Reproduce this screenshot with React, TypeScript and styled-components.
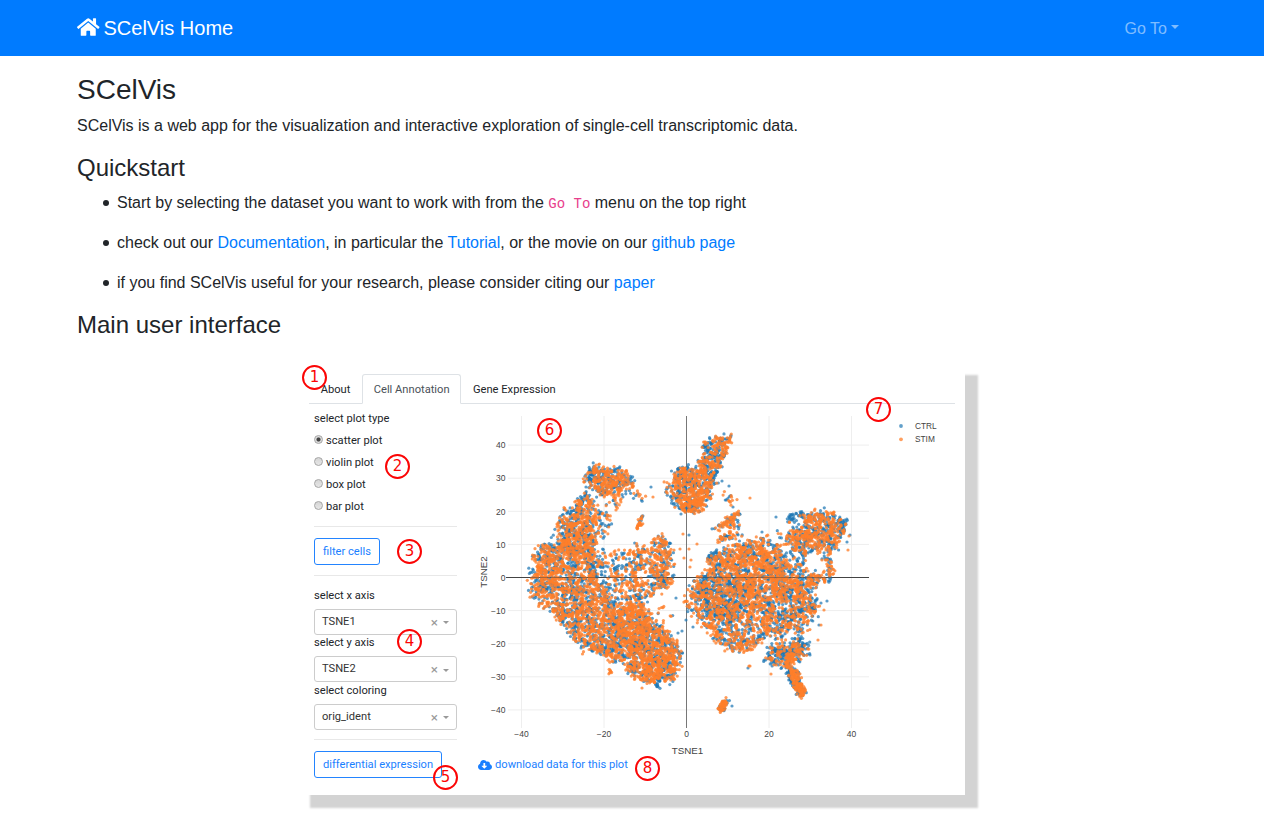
import React from "react";
import styled, { createGlobalStyle } from "styled-components";
import { FaHome, FaCloudDownloadAlt } from "react-icons/fa";

const Global = createGlobalStyle`
  *, *::before, *::after { box-sizing: border-box; }
  body {
    margin: 0;
    min-height: 831px;
    background: #fff;
    color: #212529;
    font: 400 16px/1.5 "Liberation Sans", Arial, sans-serif;
  }
`;

const Navbar = styled.nav`
  height: 56px;
  background: #007bff;
`;
const Container = styled.div`
  width: 1140px;
  margin: 0 auto;
  padding: 0 15px;
`;
const NavRow = styled(Container)`
  height: 100%;
  display: flex;
  align-items: center;
  justify-content: space-between;
`;
const Brand = styled.a`
  display: flex;
  align-items: center;
  gap: 4px;
  color: #fff;
  font-size: 20px;
  line-height: 30px;
`;
const HomeIcon = styled(FaHome)`
  width: 22.5px;
  height: 20px;
  margin-top: -2px;
`;
const NavMenu = styled.a`
  display: flex;
  align-items: center;
  gap: 4px;
  padding: 1px 8px 0;
  color: rgba(255, 255, 255, 0.5);
`;
const Caret = styled.span<{ $size: number }>`
  border: ${(p) => p.$size}px solid transparent;
  border-top-color: currentColor;
  border-bottom: 0;
`;
const MenuCaret = styled(Caret)`
  margin-top: -3px;
`;
const Page = styled(Container)`
  display: flow-root;
  padding-top: 16.5px;
`;
const Title = styled.h3`
  margin: 0 0 8px;
  font-size: 28px;
  font-weight: 500;
  line-height: 1.2;
`;
const Subtitle = styled.h4`
  margin: 0 0 8px;
  font-size: 24px;
  font-weight: 500;
  line-height: 1.2;
`;
const Text = styled.p`
  margin: 0 0 16px;
`;
const List = styled.ul`
  margin: 0;
  padding-left: 40px;
  list-style: none;
`;
const ItemText = styled(Text)`
  &::before {
    content: "";
    display: inline-block;
    width: 6px;
    height: 6px;
    margin: 0 8px 2px -14px;
    border-radius: 50%;
    background: #212529;
  }
`;
const Link = styled.a`
  color: #007bff;
`;
const Code = styled.code`
  color: #e83e8c;
  font-family: "Liberation Mono", monospace;
  font-size: 14px;
`;

const Figure = styled.section`
  position: relative;
  width: 668px;
  height: 433px;
  margin: 22.3px 0 0 220px;
  padding: 12px 10px 0 12px;
  background: #fff;
  box-shadow: 13px 13px 2px #d3d3d3;
  font-family: Roboto, sans-serif;
  font-size: 11.15px;
  line-height: 16px;
`;
const Tabs = styled.div`
  display: flex;
  height: 30px;
  border-bottom: 1px solid #dee2e6;
`;
const Tab = styled.div<{ $active?: boolean }>`
  height: 30px;
  padding: 7px 10.7px;
  border: 1px solid ${(p) => (p.$active ? "#dee2e6" : "transparent")};
  border-bottom-color: ${(p) => (p.$active ? "#fff" : "transparent")};
  border-radius: 3px 3px 0 0;
  color: ${(p) => (p.$active ? "#495057" : "#212529")};
  white-space: nowrap;
`;
const Columns = styled.div`
  display: grid;
  grid-template-columns: 143px 1fr;
  column-gap: 13px;
  padding-left: 5px;
`;
const Controls = styled.div`
  padding-top: 7px;
`;
const Label = styled.div`
  height: 16px;
`;
const Radios = styled.div`
  display: grid;
  grid-auto-rows: 22px;
  padding-top: 3px;
`;
const Radio = styled.label`
  display: flex;
  align-items: center;
  gap: 3px;
`;
const Dot = styled.span<{ $on?: boolean }>`
  width: 9px;
  height: 9px;
  margin-top: -3px;
  border: 1px solid #a5a5a5;
  border-radius: 50%;
  background: ${(p) =>
    p.$on ? "radial-gradient(circle, #444 0 1.6px, #dedede 2.5px)" : "linear-gradient(#d6d6d6, #e6e6e6)"};
`;
const Rule = styled.hr<{ $top: number; $bottom: number }>`
  margin: ${(p) => p.$top}px 0 ${(p) => p.$bottom}px;
  border: 0;
  border-top: 1px solid #e8e8e8;
`;
const Button = styled.button`
  display: block;
  height: 27px;
  padding: 1px 8px 0;
  border: 1px solid #2384ff;
  border-radius: 3px;
  background: #fff;
  color: #1a7fff;
  font: inherit;
  white-space: nowrap;
`;
const Select = styled.div`
  display: flex;
  align-items: center;
  height: 26px;
  margin: 5px 0 0;
  padding: 0 7px;
  border: 1px solid #ccc;
  border-radius: 3px;
  color: #333;
`;
const Value = styled.span`
  flex: 1;
`;
const Clear = styled.span`
  margin-right: 5px;
  color: #999;
  font-size: 13.5px;
`;
const SelectCaret = styled(Caret)`
  margin-top: 2px;
  color: #999;
`;
const Field = styled.div`
  height: 47.3px;
`;
const PlotArea = styled.div``;
const Chart = styled.svg`
  display: block;
  width: 485px;
  height: 352px;
  font-family: "Liberation Sans", Arial, sans-serif;
`;
const Download = styled.a`
  display: flex;
  align-items: center;
  gap: 3px;
  padding: 1px 0 0 8px;
  color: #1a7fff;
`;
const CloudIcon = styled(FaCloudDownloadAlt)`
  width: 14px;
  height: 12px;
`;
const Badge = styled.span<{ $x: number; $y: number }>`
  position: absolute;
  left: ${(p) => p.$x}px;
  top: ${(p) => p.$y}px;
  width: 25px;
  height: 25px;
  border: 2px solid #fb0505;
  border-radius: 50%;
  color: #fb0505;
  font: 15px/21px "DejaVu Sans", sans-serif;
  text-align: center;
`;

type Pt = [number, number];
interface Cluster {
  outline: Pt[];
  ctrl: number;
  stim: number;
  spread?: number;
}

// Cluster outlines in chart units, densities in cells per square unit.
const clusters: Cluster[] = [
  { outline: [[588,469],[600,468],[608,470],[617,468],[627,473],[632,478],[631,487],[619,494],[604,495],[592,490],[586,482]], ctrl: 0.16, stim: 0.17 },
  { outline: [[587,494],[593,503],[590,517],[594,532],[596,550],[575,556],[560,548],[554,535],[562,519],[572,507],[580,499]], ctrl: 0.13, stim: 0.15 },
  { outline: [[592,496],[600,500],[608,512],[609,528],[600,540],[594,530]], ctrl: 0.04, stim: 0.045 },
  { outline: [[600,496],[617,492],[620,500],[616,508],[606,502]], ctrl: 0.04, stim: 0.05 },
  { outline: [[528,576],[535,560],[537,545],[552,546],[562,540],[592,548],[600,564],[598,580],[606,592],[612,602],[630,604],[646,606],[656,622],[668,636],[678,645],[681,658],[675,676],[660,684],[640,680],[628,670],[612,658],[594,650],[582,648],[572,636],[560,622],[548,610],[536,598],[531,588]], ctrl: 0.105, stim: 0.125 },
  { outline: [[615,600],[640,606],[655,622],[679,646],[680,662],[672,678],[655,684],[640,678],[626,650]], ctrl: 0.05, stim: 0.09 },
  { outline: [[598,553],[618,548],[640,552],[660,556],[660,580],[645,600],[612,600],[602,585],[598,572]], ctrl: 0.035, stim: 0.04 },
  { outline: [[636,548],[648,546],[655,560],[650,572],[638,570],[630,562]], ctrl: 0.05, stim: 0.07 },
  { outline: [[656,536],[664,535],[669,548],[670,562],[672,580],[660,590],[655,580],[660,560],[653,550]], ctrl: 0.12, stim: 0.16 },
  { outline: [[624,578],[645,580],[654,594],[640,606],[626,604]], ctrl: 0.05, stim: 0.06 },
  { outline: [[657,607],[664,607],[658,614]], ctrl: 0.05, stim: 0.15, spread: 1 },
  { outline: [[670,614],[675,615],[671,618]], ctrl: 0.05, stim: 0.25, spread: 1 },
  { outline: [[641,515],[643,516],[638,529],[636,528]], ctrl: 0.3, stim: 0.45, spread: 0.4 },
  { outline: [[635,491],[643,497],[642,500],[636,496]], ctrl: 0.12, stim: 0.25, spread: 1 },
  { outline: [[610,670],[612,670],[610,676]], ctrl: 0.1, stim: 0.6, spread: 0.8 },
  { outline: [[676,468],[690,466],[698,470],[708,470],[714,480],[712,495],[706,505],[694,512],[684,511],[674,504],[671,490]], ctrl: 0.14, stim: 0.18 },
  { outline: [[664,480],[672,484],[670,498],[663,496]], ctrl: 0.03, stim: 0.08 },
  { outline: [[684,498],[700,500],[694,513],[682,510]], ctrl: 0.08, stim: 0.2, spread: 1 },
  { outline: [[702,446],[712,437],[722,434],[731,435],[730,448],[723,458],[718,472],[712,480],[702,474],[698,464],[704,456]], ctrl: 0.16, stim: 0.16, spread: 1.3 },
  { outline: [[720,493],[728,495],[735,501],[731,505],[726,499]], ctrl: 0.08, stim: 0.22, spread: 1.2 },
  { outline: [[739,512],[740,516],[733,522],[721,524],[727,517]], ctrl: 0.1, stim: 0.2, spread: 1 },
  { outline: [[713,527],[730,520],[735,523],[717,530]], ctrl: 0.08, stim: 0.14, spread: 1.2 },
  { outline: [[711,543],[718,536],[735,533],[737,538],[722,542]], ctrl: 0.08, stim: 0.14, spread: 1.2 },
  { outline: [[732,518],[738,528],[739,545],[733,550],[731,530]], ctrl: 0.05, stim: 0.07 },
  { outline: [[788,513],[802,513],[806,518],[796,522],[788,520]], ctrl: 0.18, stim: 0.02, spread: 1.3 },
  { outline: [[804,515],[815,512],[832,515],[842,522],[844,530],[838,540],[832,548],[818,546],[808,545],[798,550],[787,545],[790,534],[800,526]], ctrl: 0.14, stim: 0.17 },
  { outline: [[840,522],[846,520],[845,530],[839,536]], ctrl: 0.22, stim: 0.02, spread: 1 },
  { outline: [[792,553],[800,553],[803,546],[818,548],[810,555],[800,565],[792,562]], ctrl: 0.1, stim: 0.04 },
  { outline: [[820,545],[838,545],[836,552],[820,562]], ctrl: 0.06, stim: 0.07 },
  { outline: [[708,553],[717,551],[718,559],[709,562]], ctrl: 0.26, stim: 0.01, spread: 1.2 },
  { outline: [[708,560],[726,549],[748,540],[763,538],[775,545],[786,556],[790,570],[800,578],[806,595],[802,612],[796,628],[780,637],[764,638],[754,646],[740,652],[726,648],[716,640],[708,630],[698,622],[690,612],[687,598],[694,583],[704,574]], ctrl: 0.095, stim: 0.1 },
  { outline: [[735,545],[765,542],[785,565],[795,585],[775,600],[750,596],[732,570]], ctrl: 0.03, stim: 0.07 },
  { outline: [[701,576],[730,572],[745,590],[742,612],[728,622],[712,610],[700,600]], ctrl: 0.09, stim: 0.01 },
  { outline: [[712,602],[726,600],[738,618],[732,630],[722,626]], ctrl: 0.13, stim: 0.0 },
  { outline: [[738,640],[758,640],[756,650],[740,653]], ctrl: 0.03, stim: 0.13, spread: 1.3 },
  { outline: [[788,560],[806,562],[806,580],[816,595],[816,612],[808,626],[796,635],[788,620],[800,600]], ctrl: 0.07, stim: 0.07 },
  { outline: [[775,530],[795,540],[790,555],[776,550]], ctrl: 0.015, stim: 0.02 },
  { outline: [[806,580],[814,574],[830,572],[833,580],[820,583],[812,592]], ctrl: 0.09, stim: 0.14, spread: 1.4 },
  { outline: [[826,560],[834,556],[834,580],[829,580]], ctrl: 0.07, stim: 0.08, spread: 1 },
  { outline: [[804,574],[826,578],[824,584],[806,580]], ctrl: 0.06, stim: 0.03, spread: 1 },
  { outline: [[808,608],[814,600],[818,608],[814,616]], ctrl: 0.14, stim: 0.05 },
  { outline: [[770,645],[785,642],[800,638],[806,650],[796,660],[784,668],[772,662],[765,660]], ctrl: 0.18, stim: 0.08 },
  { outline: [[793,642],[802,642],[803,655],[790,665],[786,670],[782,664]], ctrl: 0.05, stim: 0.18 },
  { outline: [[802,645],[812,644],[810,655],[804,655]], ctrl: 0.08, stim: 0.02 },
  { outline: [[786,667],[800,672],[799,682],[804,688],[805,694],[800,697],[796,690],[790,680]], ctrl: 0.3, stim: 0.3, spread: 0.9 },
  { outline: [[796,682],[803,686],[804,695],[800,696]], ctrl: 0.1, stim: 0.6, spread: 0.6 },
  { outline: [[719,706],[725,699],[727,704],[724,710],[718,710]], ctrl: 0.3, stim: 0.7, spread: 0.6 },
];

const strays: Record<"ctrl" | "stim", Pt[]> = {
  ctrl: [[651,487],[586,487],[544,608],[682,631],[678,633],[676,598],[776,517],[689,535],[847,542],[748,668],[693,627],[681,514],[762,532],[733,507],[732,706],[729,486],[821,603],[827,601],[850,535],[819,625],[686,620],[722,481],[810,655]],
  stim: [[750,498],[683,534],[689,549],[697,544],[684,558],[771,674],[690,567],[691,560],[848,550],[824,610],[818,640],[821,625],[815,509],[834,512],[750,666],[642,688],[653,497],[616,510],[674,550],[680,549],[584,482],[749,666],[691,603],[849,536],[668,556]],
};

function random(seed: number) {
  let s = seed;
  return () => {
    s = (s + 0x6d2b79f5) | 0;
    let t = Math.imul(s ^ (s >>> 15), 1 | s);
    t = (t + Math.imul(t ^ (t >>> 7), 61 | t)) ^ t;
    return ((t ^ (t >>> 14)) >>> 0) / 4294967296;
  };
}

function inside([x, y]: Pt, poly: Pt[]) {
  let hit = false;
  for (let i = 0, j = poly.length - 1; i < poly.length; j = i++) {
    const [xi, yi] = poly[i];
    const [xj, yj] = poly[j];
    if (yi > y !== yj > y && x < ((xj - xi) * (y - yi)) / (yj - yi) + xi) hit = !hit;
  }
  return hit;
}

function sample(series: "ctrl" | "stim") {
  const rnd = random(series === "ctrl" ? 11 : 29);
  const out: Pt[] = [...strays[series]];
  for (const c of clusters) {
    const xs = c.outline.map((p) => p[0]);
    const ys = c.outline.map((p) => p[1]);
    const x0 = Math.min(...xs);
    const y0 = Math.min(...ys);
    const w = Math.max(...xs) - x0;
    const h = Math.max(...ys) - y0;
    const n = Math.round(w * h * c[series]);
    const spread = c.spread ?? 2.4;
    const jitter = (k: number) => (rnd() + rnd() + rnd() - 1.5) * 2 * k;
    for (let i = 0; i < n; i++) {
      const p: Pt = [x0 + rnd() * w, y0 + rnd() * h];
      if (!inside(p, c.outline)) continue;
      const q: Pt = [p[0] + jitter(spread), p[1] + jitter(spread)];
      out.push(q);
      // Neighbouring cells form small clumps.
      if (rnd() < 0.4) out.push([q[0] + jitter(1.6), q[1] + jitter(1.6)]);
    }
  }
  return out.map(([x, y]): Pt => [+x.toFixed(1), +y.toFixed(1)]);
}

const ctrlCells = sample("ctrl");
const stimCells = sample("stim");
const xTicks = [-40, -20, 0, 20, 40];
const yTicks = [40, 30, 20, 10, 0, -10, -20, -30, -40];
const px = (v: number) => 686.5 + v * 4.125;
const py = (v: number) => 577.5 - v * 3.31;
const tick = (v: number) => String(v).replace("-", "−");

function Scatter() {
  return (
    <Chart viewBox="470 404 485 352">
      <g stroke="#eeeeee" strokeWidth="1">
        {xTicks.map((v) => v !== 0 && <line key={v} x1={px(v)} x2={px(v)} y1="416" y2="728" />)}
        {yTicks.map((v) => v !== 0 && <line key={v} x1="508" x2="869" y1={py(v)} y2={py(v)} />)}
      </g>
      <line x1="686.5" x2="686.5" y1="416" y2="728" stroke="#777" />
      <line x1="506" x2="869" y1="577.5" y2="577.5" stroke="#444" />
      <g fill="#1f77b4" fillOpacity="0.72">
        {ctrlCells.map(([x, y], i) => <circle key={i} cx={x} cy={y} r="1.6" />)}
      </g>
      <g fill="#ff7f2a" fillOpacity="0.78">
        {stimCells.map(([x, y], i) => <circle key={i} cx={x} cy={y} r="1.6" />)}
      </g>
      <line x1="506" x2="869" y1="577.5" y2="577.5" stroke="#444" strokeOpacity="0.45" />
      <g fill="#444" fontSize="8.5">
        {xTicks.map((v) => <text key={v} x={px(v)} y="737.3" textAnchor="middle">{tick(v)}</text>)}
        {yTicks.map((v) => <text key={v} x="505.5" y={py(v) + 3.2} textAnchor="end">{tick(v)}</text>)}
        <text x="915" y="429" fontSize="8.3">CTRL</text>
        <text x="915" y="442.3" fontSize="8.3">STIM</text>
      </g>
      <g fill="#444" fontSize="9.8" textAnchor="middle">
        <text x="687.5" y="754">TSNE1</text>
        <text transform="translate(487 572) rotate(-90)">TSNE2</text>
      </g>
      <circle cx="901" cy="426" r="1.9" fill="#1f77b4" fillOpacity="0.7" />
      <circle cx="901" cy="439.3" r="1.9" fill="#ff7f2a" fillOpacity="0.75" />
    </Chart>
  );
}

const plotTypes = ["scatter plot", "violin plot", "box plot", "bar plot"];
const fields = [
  ["select x axis", "TSNE1"],
  ["select y axis", "TSNE2"],
  ["select coloring", "orig_ident"],
];
const badges: Pt[] = [[5, 3], [88, 92], [100, 177], [100, 267], [136, 403], [240, 56], [569, 35], [338, 394]];

export default function App() {
  return (
    <>
      <Global />
      <Navbar>
        <NavRow>
          <Brand><HomeIcon />SCelVis Home</Brand>
          <NavMenu>Go To<MenuCaret $size={4.5} /></NavMenu>
        </NavRow>
      </Navbar>
      <Page>
        <Title>SCelVis</Title>
        <Text>SCelVis is a web app for the visualization and interactive exploration of single-cell transcriptomic data.</Text>
        <Subtitle>Quickstart</Subtitle>
        <List>
          <li><ItemText>Start by selecting the dataset you want to work with from the <Code>Go To</Code> menu on the top right</ItemText></li>
          <li><ItemText>check out our <Link>Documentation</Link>, in particular the <Link>Tutorial</Link>, or the movie on our <Link>github page</Link></ItemText></li>
          <li><ItemText>if you find SCelVis useful for your research, please consider citing our <Link>paper</Link></ItemText></li>
        </List>
        <Subtitle>Main user interface</Subtitle>
        <Figure>
          <Tabs>
            <Tab>About</Tab>
            <Tab $active>Cell Annotation</Tab>
            <Tab>Gene Expression</Tab>
          </Tabs>
          <Columns>
            <Controls>
              <Label>select plot type</Label>
              <Radios>
                {plotTypes.map((t, i) => <Radio key={t}><Dot $on={i === 0} />{t}</Radio>)}
              </Radios>
              <Rule $top={8} $bottom={11} />
              <Button>filter cells</Button>
              <Rule $top={10} $bottom={12} />
              {fields.map(([label, value]) => (
                <Field key={label}>
                  <Label>{label}</Label>
                  <Select>
                    <Value>{value}</Value>
                    <Clear>×</Clear>
                    <SelectCaret $size={3.5} />
                  </Select>
                </Field>
              ))}
              <Rule $top={9} $bottom={11} />
              <Button>differential expression</Button>
            </Controls>
            <PlotArea>
              <Scatter />
              <Download><CloudIcon />download data for this plot</Download>
            </PlotArea>
          </Columns>
          {badges.map(([x, y], i) => <Badge key={i} $x={x} $y={y}>{i + 1}</Badge>)}
        </Figure>
      </Page>
    </>
  );
}
